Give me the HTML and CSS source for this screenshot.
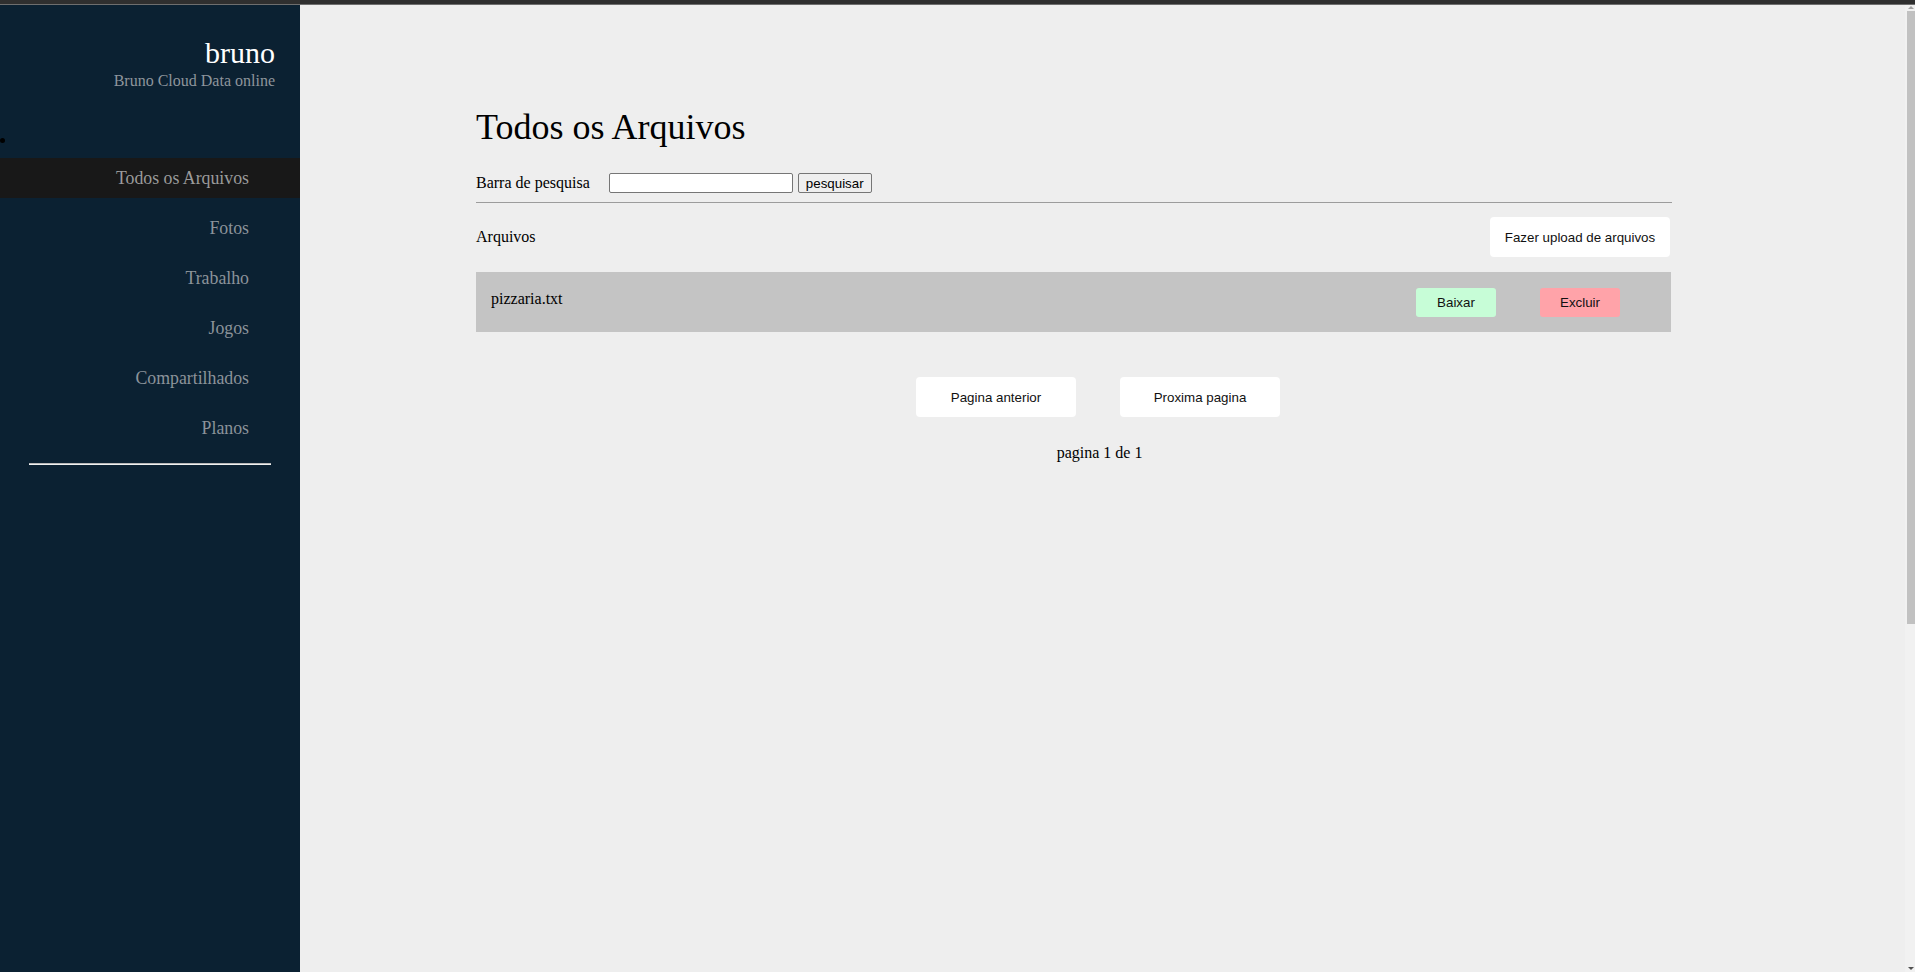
FILE: index.html
```html
<!DOCTYPE html>
<html lang="pt">
<head>
<meta charset="utf-8">
<title>Todos os Arquivos</title>
<link rel="stylesheet" href="styles.css">
</head>
<body>
<div class="topbar"></div>
<div class="shell">
  <aside class="sidebar">
    <div class="brand">
      <div class="brand-name">bruno</div>
      <div class="brand-sub">Bruno Cloud Data online</div>
    </div>
    <div class="marker"></div>
    <nav class="nav">
      <a class="nav-item active">Todos os Arquivos</a>
      <a class="nav-item">Fotos</a>
      <a class="nav-item">Trabalho</a>
      <a class="nav-item">Jogos</a>
      <a class="nav-item">Compartilhados</a>
      <a class="nav-item">Planos</a>
    </nav>
    <div class="side-rule"></div>
  </aside>
  <main class="main">
    <div class="content">
      <h1 class="title">Todos os Arquivos</h1>
      <div class="search">
        <span class="search-label">Barra de pesquisa</span>
        <input class="search-input" type="text">
        <button class="search-btn">pesquisar</button>
      </div>
      <div class="rule"></div>
      <div class="files-head">
        <span>Arquivos</span>
        <button class="btn-white upload">Fazer upload de arquivos</button>
      </div>
      <div class="file-row">
        <span class="file-name">pizzaria.txt</span>
        <div class="file-actions">
          <button class="btn-small btn-green">Baixar</button>
          <button class="btn-small btn-red">Excluir</button>
        </div>
      </div>
    </div>
    <div class="pager">
      <button class="btn-white pager-btn">Pagina anterior</button>
      <button class="btn-white pager-btn">Proxima pagina</button>
    </div>
    <div class="page-info">pagina 1 de 1</div>
  </main>
  <div class="scrollbar">
    <div class="sb-arrow up"></div>
    <div class="sb-thumb"></div>
    <div class="sb-fill"></div>
    <div class="sb-arrow down"></div>
  </div>
</div>
</body>
</html>
```

FILE: styles.css
```css
html, body {
  margin: 0;
  padding: 0;
  height: 100%;
  overflow: hidden;
}
body {
  font-family: "Liberation Serif", "Times New Roman", serif;
  font-size: 16px;
  color: #000;
  background: #eeeeee;
  display: flex;
  flex-direction: column;
}
.topbar {
  height: 4px;
  background: #2f2f2f;
  border-bottom: 1px solid #6e6e6e;
  flex: none;
}
.shell {
  flex: 1;
  display: flex;
  min-height: 0;
}
.sidebar {
  width: 300px;
  flex: none;
  background: #0b2132;
  display: flex;
  flex-direction: column;
}
.brand {
  padding: 31px 25px 0 0;
  text-align: right;
}
.brand-name {
  font-size: 30px;
  color: #ffffff;
  line-height: 34px;
}
.brand-sub {
  margin-top: 2px;
  color: #8e959c;
  line-height: 18px;
}
.marker {
  width: 5px;
  height: 5px;
  border-radius: 50%;
  background: #000;
  margin-top: 48px;
  margin-left: 0;
}
.nav {
  margin-top: 15px;
  display: flex;
  flex-direction: column;
  gap: 10px;
}
.nav-item {
  height: 40px;
  line-height: 40px;
  font-size: 17.8px;
  text-align: right;
  padding-right: 51px;
  color: #8c939a;
}
.nav-item.active {
  background: #181818;
  color: #9b9b9b;
}
.side-rule {
  margin: 15px 29px 0 29px;
  height: 0;
  border-top: 1px solid #b8b8b8;
  border-bottom: 1px solid #f0f0f0;
}
.main {
  flex: 1;
  min-width: 0;
}
.content {
  margin-left: 176px;
  width: 1196px;
}
.title {
  margin: 102px 0 0;
  font-size: 36px;
  line-height: 40px;
  font-weight: normal;
}
.search {
  margin-top: 26px;
  height: 20px;
  display: flex;
  align-items: center;
}
.search-label {
  line-height: 18px;
}
.search-input {
  margin: 0 0 0 19px;
  width: 184px;
  height: 20px;
  box-sizing: border-box;
  border: 1px solid #767676;
  border-radius: 2px;
  background: #fff;
  padding: 1px 2px;
  font-family: "Liberation Sans", Arial, sans-serif;
  font-size: 13.33px;
}
.search-btn {
  margin-left: 5px;
  width: 74px;
  height: 20px;
  box-sizing: border-box;
  border: 1px solid #767676;
  border-radius: 2px;
  background: #efefef;
  padding: 0;
  font-family: "Liberation Sans", Arial, sans-serif;
  font-size: 13.33px;
  color: #000;
}
.rule {
  margin-top: 9px;
  height: 1px;
  background: #9c9c9c;
}
.files-head {
  margin-top: 14px;
  height: 40px;
  display: flex;
  align-items: center;
  justify-content: space-between;
  padding-right: 2px;
}
.btn-white {
  background: #ffffff;
  border: none;
  border-radius: 4px;
  font-family: "Liberation Sans", Arial, sans-serif;
  font-size: 13.33px;
  color: #111;
  padding: 0;
}
.upload {
  width: 180px;
  height: 40px;
}
.file-row {
  margin-top: 15px;
  height: 60px;
  width: 1195px;
  background: #c4c4c4;
  display: flex;
  align-items: center;
  justify-content: space-between;
  box-sizing: border-box;
  padding: 0 51px 0 15px;
}
.file-name {
  padding-bottom: 6px;
  line-height: 18px;
}
.file-actions {
  display: flex;
  gap: 44px;
}
.btn-small {
  width: 80px;
  height: 29px;
  border: none;
  border-radius: 3px;
  font-family: "Liberation Sans", Arial, sans-serif;
  font-size: 13.33px;
  color: #111;
  padding: 0;
}
.btn-green {
  background: #c7fdd7;
}
.btn-red {
  background: #ffa3a9;
}
.pager {
  margin-top: 45px;
  display: flex;
  justify-content: center;
  gap: 44px;
  padding-right: 9px;
}
.pager-btn {
  width: 160px;
  height: 40px;
}
.page-info {
  margin-top: 27px;
  text-align: center;
  line-height: 18px;
  padding-right: 6px;
}
.scrollbar {
  width: 10px;
  flex: none;
  background: #f1f1f1;
  display: flex;
  flex-direction: column;
  align-items: flex-end;
}
.sb-arrow {
  width: 8px;
  height: 6px;
  flex: none;
  position: relative;
}
.sb-arrow.up::after,
.sb-arrow.down::after {
  content: "";
  position: absolute;
  left: 1px;
  border-left: 3px solid transparent;
  border-right: 3px solid transparent;
}
.sb-arrow.up::after {
  top: 1px;
  border-bottom: 3px solid #a3a3a3;
}
.sb-arrow.down::after {
  top: 1px;
  border-top: 3px solid #505050;
}
.sb-thumb {
  width: 8px;
  height: 613px;
  background: #c1c1c1;
  flex: none;
}
.sb-fill {
  flex: 1;
}
```
